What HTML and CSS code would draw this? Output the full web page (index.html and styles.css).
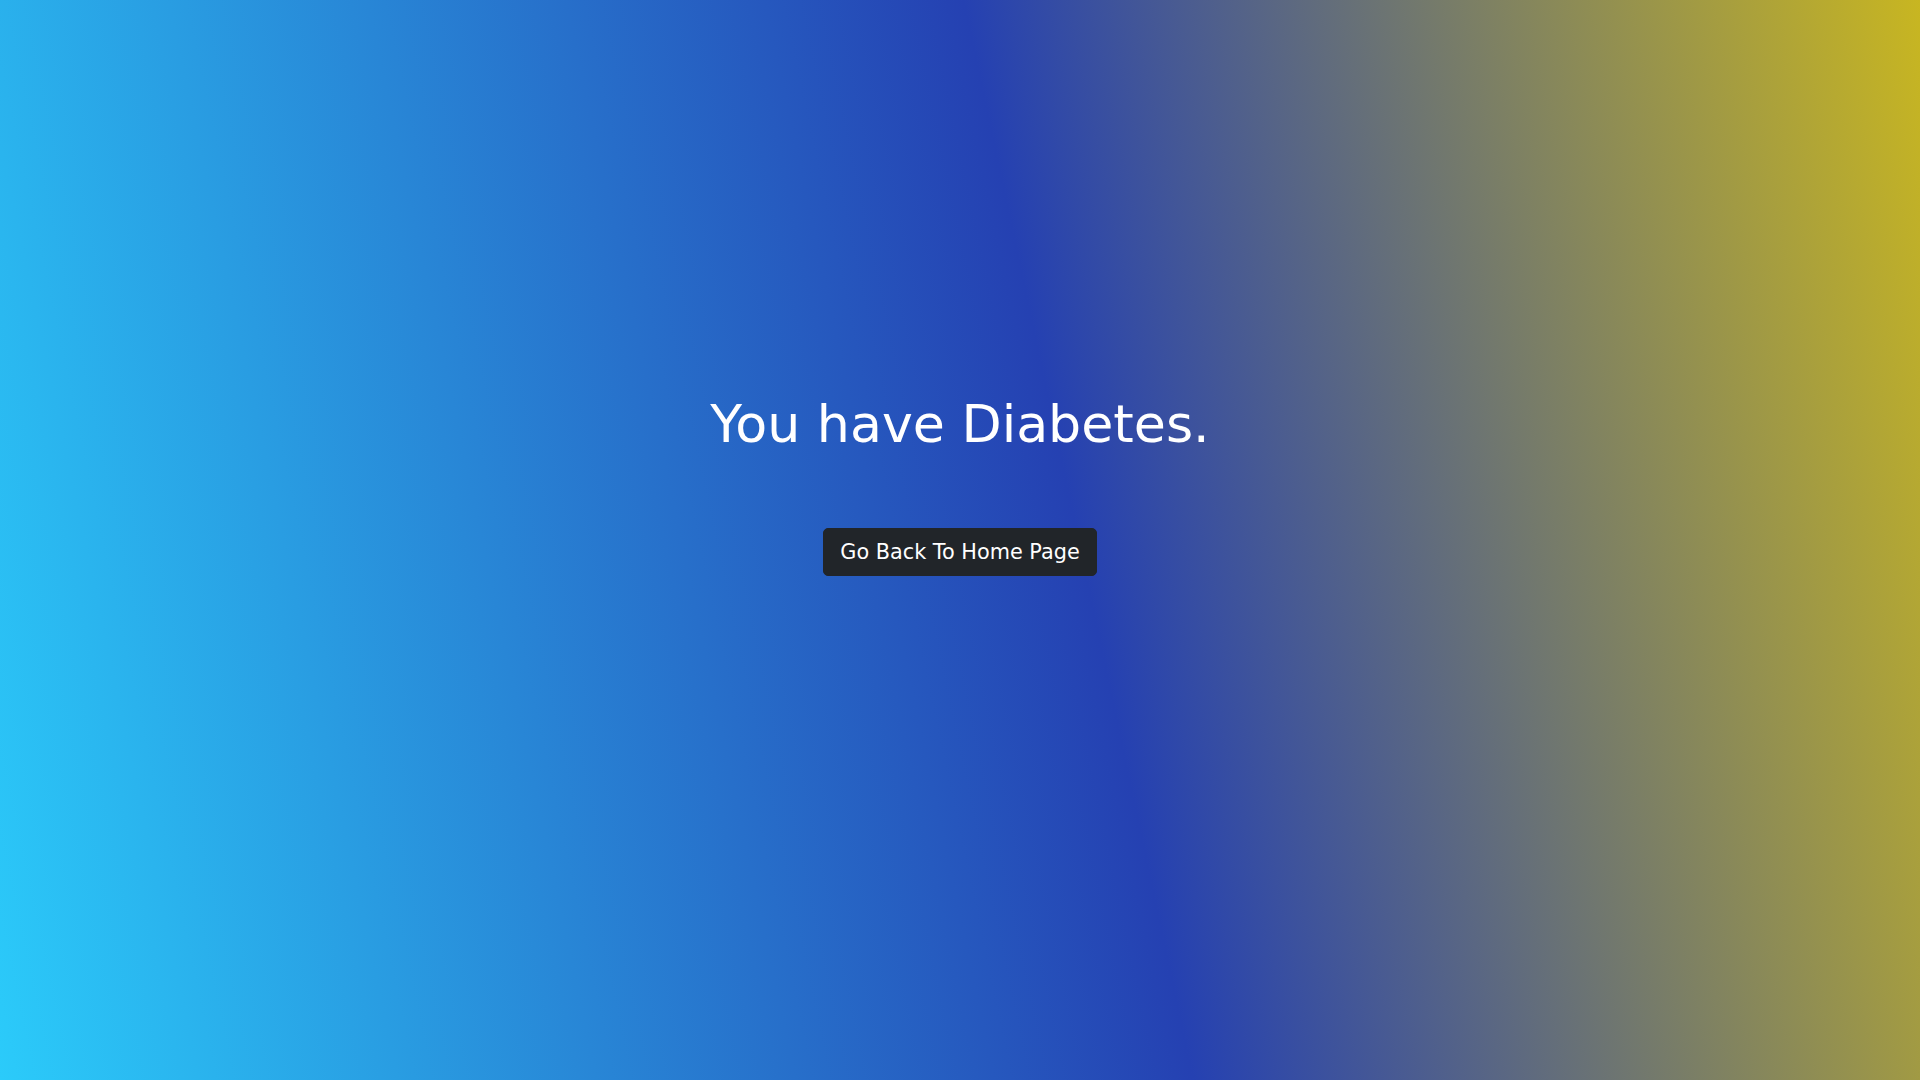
FILE: index.html
```html
<!DOCTYPE html>
<html lang="en">
<head>
<meta charset="utf-8">
<title>Result</title>
<link rel="stylesheet" href="styles.css">
</head>
<body>
<main class="result">
  <h1 class="result-title">You have Diabetes.</h1>
  <a class="btn-home" href="#">Go Back To Home Page</a>
</main>
</body>
</html>
```
FILE: styles.css
```css
html, body {
  margin: 0;
  height: 100%;
}
body {
  font-family: "DejaVu Sans", "Liberation Sans", sans-serif;
  background: linear-gradient(78deg, #2bcbfa 0%, #2541b2 55.5%, #c8b621 100%);
  color: #fff;
}
.result {
  box-sizing: border-box;
  height: 100%;
  display: flex;
  flex-direction: column;
  align-items: center;
  padding-top: 392.6px;
}
.result-title {
  margin: 0;
  font-size: 52.2px;
  font-weight: 400;
  line-height: 1.2;
}
.btn-home {
  margin-top: 73px;
  display: inline-block;
  padding: 8px 16px;
  font-size: 20.8px;
  line-height: 30px;
  color: #fff;
  background: #212529;
  border: 1px solid #212529;
  border-radius: 5px;
  text-decoration: none;
}
```
